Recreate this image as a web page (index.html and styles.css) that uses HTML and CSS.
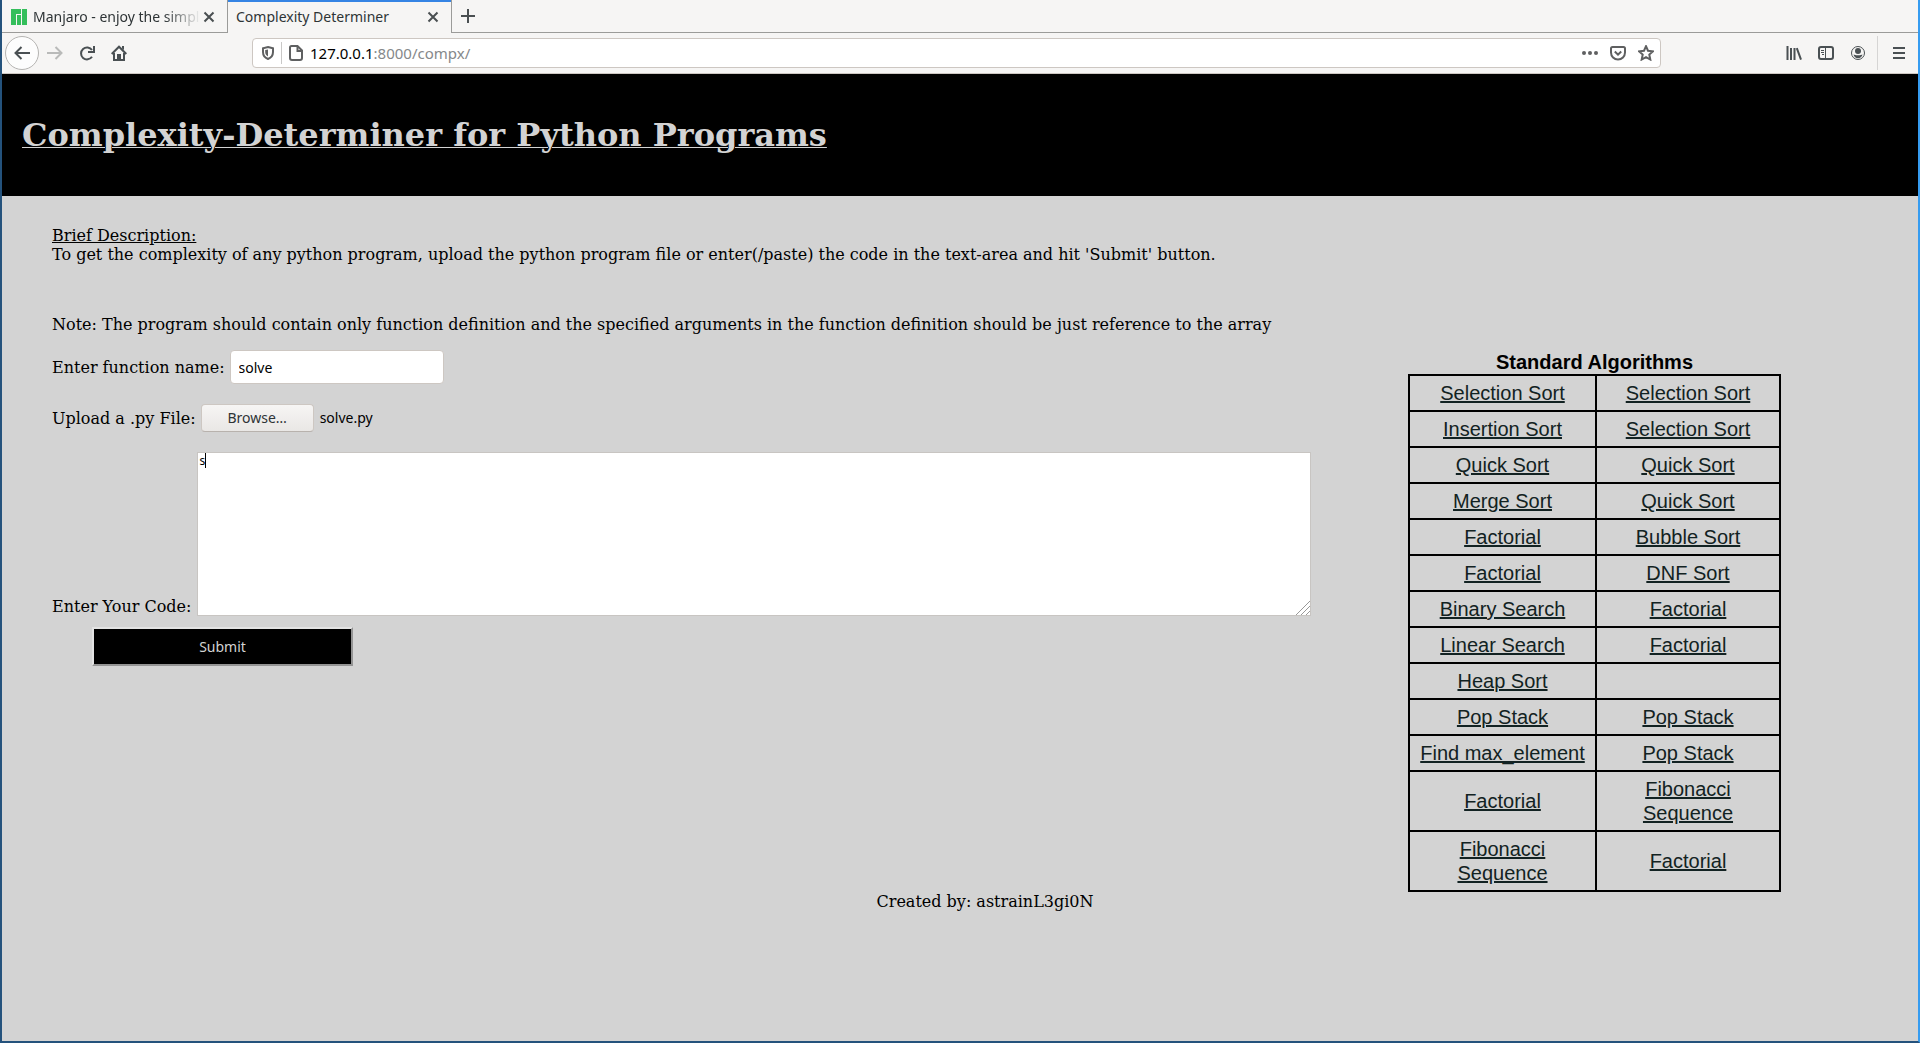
FILE: index.html
```html
<!DOCTYPE html>
<html lang="en">
<head>
<meta charset="utf-8">
<title>Complexity Determiner</title>
<link rel="stylesheet" href="styles.css">
</head>
<body>
<div class="window">
  <div class="tabs">
    <div class="tab">
      <svg class="favicon" width="16" height="16" viewBox="0 0 16 16" aria-hidden="true"><path fill="#34be5b" d="M0 0h10v5H5v11H0zM6 6h4v10H6zM11 0h5v16h-5z"/></svg>
      <span class="tab-title tab-fade">Manjaro - enjoy the simpl</span>
      <button class="tab-close" aria-label="Close tab"><svg width="12" height="12" viewBox="0 0 12 12"><path d="M1.500 1.500l9 9M10.500 1.500l-9 9"/></svg></button>
    </div>
    <div class="tab tab-active">
      <span class="tab-title">Complexity Determiner</span>
      <button class="tab-close" aria-label="Close tab"><svg width="12" height="12" viewBox="0 0 12 12"><path d="M1.500 1.500l9 9M10.500 1.500l-9 9"/></svg></button>
    </div>
    <button class="tab-new" aria-label="New tab"><svg width="14" height="14" viewBox="0 0 14 14"><path d="M7 0v14M0 7h14"/></svg></button>
  </div>
  <div class="toolbar">
    <div class="tools">
      <button class="tool tool-back" aria-label="Back"><svg width="16" height="16" viewBox="0 0 16 16"><path d="M16 8H2M7.500 2L1.500 8l6 6"/></svg></button>
      <button class="tool tool-off" aria-label="Forward"><svg width="16" height="16" viewBox="0 0 16 16"><path d="M0 8h14M8.500 2l6 6-6 6"/></svg></button>
      <button class="tool" aria-label="Reload"><svg width="16" height="16" viewBox="0 0 16 16"><path d="M13 11.800A6 6 0 1 1 13 5"/><path d="M15 1v6H9"/></svg></button>
      <button class="tool" aria-label="Home"><svg width="16" height="16" viewBox="0 0 16 16"><path d="M.7 9L8 1.700 15.300 9M3 8v7h10V8"/><path class="solid" d="M6 9h4v6H6zM11 1h2v4l-2-1.500z"/></svg></button>
    </div>
    <div class="urlbar">
      <svg width="14" height="16" viewBox="0 0 14 16" aria-hidden="true"><path d="M7 2l5 1.200V7c0 3.500-2 5.800-5 7-3-1.200-5-3.500-5-7V3.200z"/><path class="solid" d="M7 4.500v7C5 10.300 4.200 9 4.200 7V5z"/></svg>
      <span class="url-rule"></span>
      <svg width="16" height="16" viewBox="0 0 16 16" aria-hidden="true"><path d="M3.500 1h6L14 5.500V13a2 2 0 0 1-2 2H4a2 2 0 0 1-2-2V2.500A1.500 1.500 0 0 1 3.500 1z"/><path d="M9.500 1v5H14"/></svg>
      <span class="url"><span class="host">127.0.0.1</span>:8000/compx/</span>
      <div class="url-actions">
        <svg width="16" height="16" viewBox="0 0 16 16" aria-hidden="true"><g class="solid"><circle cx="2" cy="8" r="2"/><circle cx="8" cy="8" r="2"/><circle cx="14" cy="8" r="2"/></g></svg>
        <svg width="16" height="16" viewBox="0 0 16 16" aria-hidden="true"><path d="M2.500 2h11A1.500 1.500 0 0 1 15 3.500V7.500a7 7 0 0 1-14 0V3.500A1.500 1.500 0 0 1 2.500 2zM4.800 6.500L8 9.700l3.200-3.200"/></svg>
        <svg width="16" height="16" viewBox="0 0 16 16" aria-hidden="true"><path d="M8 1.200l2 4.500 5 .6-3.700 3.300 1 4.900L8 12.100l-4.300 2.400 1-4.900L1 6.300l5-.6z"/></svg>
      </div>
    </div>
    <div class="tools">
      <button class="tool" aria-label="Library"><svg width="16" height="16" viewBox="0 0 16 16"><path d="M1.500 1v14M5 3v12M8.500 3v12M10.800 3.200L15 14.700"/></svg></button>
      <button class="tool" aria-label="Sidebars"><svg width="16" height="16" viewBox="0 0 16 16"><rect x="1" y="2" width="14" height="12" rx="2"/><path class="thin" d="M7.500 2v12M3 5.500h3M3 7.500h3M4 9.500h2"/></svg></button>
      <button class="tool" aria-label="Account"><svg width="16" height="16" viewBox="0 0 16 16"><circle class="thin" cx="8" cy="8" r="6.500"/><circle class="solid" cx="8" cy="6" r="3"/><path class="solid" d="M3.500 9.500c1 .5 2 .8 4.500.8s3.500-.3 4.500-.8c-.5 2.300-2.300 3.700-4.500 3.700s-4-1.400-4.500-3.700z"/></svg></button>
      <span class="tool-rule"></span>
      <button class="tool" aria-label="Menu"><svg width="16" height="16" viewBox="0 0 16 16"><path d="M2 3h12M2 8h12M2 13h12"/></svg></button>
    </div>
  </div>

  <div class="page">
    <header class="banner"><h1>Complexity-Determiner for Python Programs</h1></header>
    <main>
      <section class="intro">
        <p><u>Brief Description:</u><br>To get the complexity of any python program, upload the python program file or enter(/paste) the code in the text-area and hit 'Submit' button.</p>
        <p>Note: The program should contain only function definition and the specified arguments in the function definition should be just reference to the array</p>
      </section>
      <div class="columns">
        <form class="form" onsubmit="return false">
          <div class="field">
            <label for="fname">Enter function name:</label>
            <input class="text" id="fname" type="text" value="solve">
          </div>
          <div class="field">
            <label for="pyfile">Upload a .py File:</label>
            <div class="upload">
              <span class="browse">Browse…</span><span>solve.py</span>
              <input class="upload-input" id="pyfile" type="file" accept=".py">
            </div>
          </div>
          <div class="field field-code">
            <label for="code">Enter Your Code:</label>
            <div class="editor">
              <textarea class="code" id="code">s</textarea>
              <span class="caret"></span>
              <svg class="grip" width="14" height="14" viewBox="0 0 14 14" aria-hidden="true"><path d="M0 14L14 0M5 14l9-9M10 14l4-4"/></svg>
            </div>
          </div>
          <button class="submit" type="submit">Submit</button>
        </form>
        <table class="algorithms">
          <caption>Standard Algorithms</caption>
          <tbody>
            <tr><td><a href="#">Selection Sort</a></td><td><a href="#">Selection Sort</a></td></tr>
            <tr><td><a href="#">Insertion Sort</a></td><td><a href="#">Selection Sort</a></td></tr>
            <tr><td><a href="#">Quick Sort</a></td><td><a href="#">Quick Sort</a></td></tr>
            <tr><td><a href="#">Merge Sort</a></td><td><a href="#">Quick Sort</a></td></tr>
            <tr><td><a href="#">Factorial</a></td><td><a href="#">Bubble Sort</a></td></tr>
            <tr><td><a href="#">Factorial</a></td><td><a href="#">DNF Sort</a></td></tr>
            <tr><td><a href="#">Binary Search</a></td><td><a href="#">Factorial</a></td></tr>
            <tr><td><a href="#">Linear Search</a></td><td><a href="#">Factorial</a></td></tr>
            <tr><td><a href="#">Heap Sort</a></td><td></td></tr>
            <tr><td><a href="#">Pop Stack</a></td><td><a href="#">Pop Stack</a></td></tr>
            <tr><td><a href="#">Find max_element</a></td><td><a href="#">Pop Stack</a></td></tr>
            <tr><td><a href="#">Factorial</a></td><td><a href="#">Fibonacci Sequence</a></td></tr>
            <tr><td><a href="#">Fibonacci Sequence</a></td><td><a href="#">Factorial</a></td></tr>
          </tbody>
        </table>
      </div>
    </main>
    <footer class="credit">Created by: astrainL3gi0N</footer>
  </div>
</div>
</body>
</html>
```
FILE: styles.css
```css
* { box-sizing: border-box; }
body { margin: 0; }
button { padding: 0; border: 0; background: none; color: inherit; }
svg { display: block; flex: none; fill: none; stroke: currentColor; stroke-width: 2; }
svg .solid { fill: currentColor; stroke: none; }
svg .thin { stroke-width: 1; }

.window {
  display: flex;
  flex-direction: column;
  min-height: 100vh;
  border: 2px solid #24527c;
  border-top: 0;
  border-right-color: #369cf0;
}

/* Tab strip */
.tabs {
  display: flex;
  height: 33px;
  background: #f6f5f4;
  border-bottom: 1px solid #9b9b99;
  color: #2e3436;
  font: 14px/20px "Noto Sans", sans-serif;
}
.tab {
  display: flex;
  align-items: center;
  width: 225px;
  height: 33px;
  padding: 1px 10px 0 9px;
}
.tab-active {
  padding-left: 8px;
  background: #f6f5f4;
  border: solid #9b9b99;
  border-width: 0 1px;
  box-shadow: inset 0 2px #3584e4;
}
.favicon { margin-right: 6px; stroke: none; }
.tab-title { flex: 1; overflow: hidden; white-space: nowrap; }
.tab-fade { mask-image: linear-gradient(to right, #000 78%, transparent); }
.tab-close, .tab-new { display: grid; place-items: center; color: #4a4f51; }
.tab-close { width: 16px; height: 16px; }
.tab-new { width: 32px; height: 32px; }

/* Navigation toolbar */
.toolbar {
  display: flex;
  align-items: center;
  justify-content: space-between;
  gap: 117px;
  height: 41px;
  padding: 0 3px;
  background: #f6f5f4;
  border-bottom: 1px solid #cdc7c2;
}
.tools { display: flex; align-items: center; color: #4a5053; }
.tool { display: grid; place-items: center; width: 32px; height: 32px; }
.tool-back {
  width: 34px;
  height: 34px;
  border: 1px solid #b5b4b2;
  border-radius: 50%;
  background: #fdfdfd;
}
.tool-off { color: #b9bab9; }
.tool-rule { width: 1px; height: 34px; margin: 0 5px 0 3px; background: #d6d5d4; }
.urlbar {
  display: flex;
  flex: 1;
  align-items: center;
  gap: 6px;
  height: 30px;
  padding: 0 6px 0 8px;
  background: #fff;
  border: 1px solid #cdc7c2;
  border-radius: 4px;
  color: #5f6061;
}
.url-rule { width: 1px; height: 22px; background: #c9c8c7; }
.url { flex: 1; color: #85888a; font: 15px/20px "Noto Sans", sans-serif; }
.host { color: #000; }
.url-actions { display: flex; gap: 12px; }

/* Page */
.page {
  flex: 1;
  background: lightgray;
  color: #000;
  font: 16px/19px "DejaVu Serif", serif;
}
.banner { padding: 42px 20px; background: #000; color: lightgray; }
h1 { margin: 0; font-size: 32px; line-height: 38px; text-decoration: underline 1px; }
.intro { padding: 30px 50px 0; }
.intro p { margin: 0 0 51px; }
.intro p:last-child { margin-bottom: 16px; }
.columns { display: flex; align-items: flex-start; gap: 97px; padding: 0 137px 0 50px; }
.form { flex: 1; }
.field { display: flex; align-items: center; gap: 5px; margin-bottom: 20px; }
.text {
  width: 214px;
  height: 34px;
  padding: 0 8px;
  border: 1px solid #cdc7c2;
  border-radius: 4px;
  background: #fff;
  font: 14px/20px "Noto Sans", sans-serif;
}
.upload {
  position: relative;
  display: flex;
  align-items: center;
  gap: 6px;
  font: 14px/20px "Noto Sans", sans-serif;
}
.browse {
  width: 113px;
  padding: 3px 0;
  border: 1px solid #cdc7c2;
  border-bottom-color: #b8b2ad;
  border-radius: 4px;
  background: linear-gradient(#f6f5f4, #e9e7e5);
  color: #2e3436;
  text-align: center;
}
.upload-input { position: absolute; inset: 0; width: 100%; opacity: 0; }
.field-code { align-items: flex-end; gap: 6px; margin-bottom: 11px; }
.editor { position: relative; flex: 1; }
.code {
  display: block;
  width: 100%;
  height: 164px;
  padding: 0 1px;
  border: 1px solid #c8c5c2;
  background: #fff;
  font: 12px/15px "Noto Sans", sans-serif;
  resize: none;
}
.caret { position: absolute; top: 1px; left: 8px; width: 1px; height: 15px; background: #000; }
.grip { position: absolute; right: 1px; bottom: 1px; color: #999; stroke-width: 1; }
.submit {
  display: block;
  width: 261px;
  height: 39px;
  margin-left: 40px;
  border: 2px solid;
  border-color: #e3e3e3 #949494 #949494 #e3e3e3;
  background: #000;
  color: lightgray;
  font: 14px/20px "Noto Sans", sans-serif;
}
.algorithms {
  width: 373px;
  border-collapse: collapse;
  font: 20px/24px "Liberation Sans", Arial, sans-serif;
  text-align: center;
}
.algorithms caption { font-weight: bold; }
.algorithms td { padding: 5px 10px; border: 2px solid #000; }
.algorithms td:first-child { width: 187px; }
.algorithms a { color: #122222; }
.credit { padding-left: 50px; text-align: center; }
```
